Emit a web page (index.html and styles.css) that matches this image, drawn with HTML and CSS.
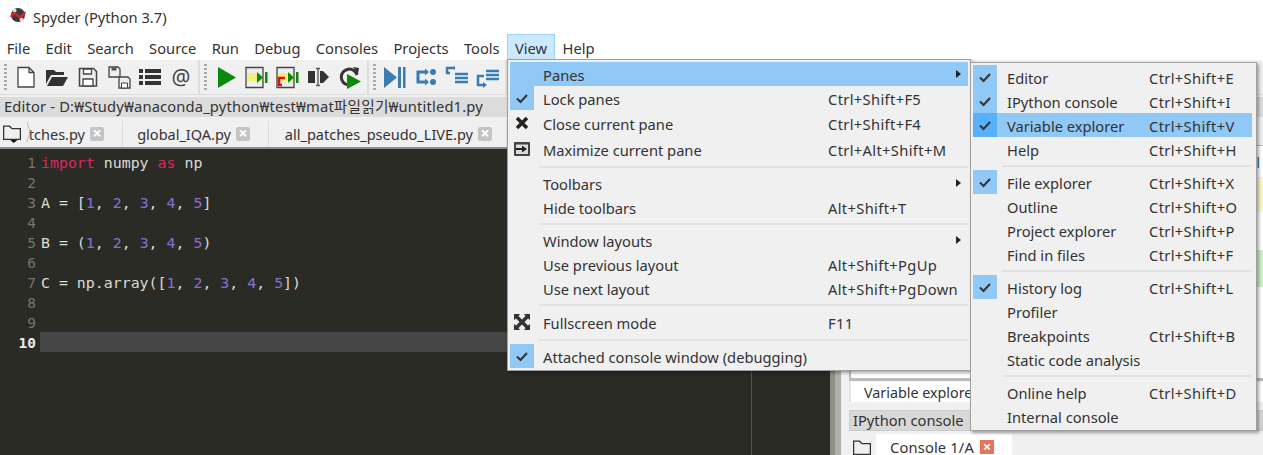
FILE: index.html
```html
<!DOCTYPE html>
<html lang="en">
<head>
<meta charset="utf-8">
<title>Spyder (Python 3.7)</title>
<link rel="stylesheet" href="styles.css">
</head>
<body>
<div class="app">
  <header class="titlebar">
    <svg class="logo" width="16" height="16" viewBox="0 0 16 16"><circle cx="8" cy="8" r="7" fill="#3a3a3a"/><circle cx="4.500" cy="3.500" r="2" fill="#ddd"/><circle cx="11.500" cy="12.500" r="2" fill="#ddd"/><path d="M1 10c3-6 5-3 7-1s4 1 7-4" stroke="#d8232a" stroke-width="2.500" fill="none"/></svg>
    <span>Spyder (Python 3.7)</span>
  </header>
  <nav class="menubar">
    <span class="mi">File</span><span class="mi">Edit</span><span class="mi">Search</span><span class="mi">Source</span><span class="mi">Run</span><span class="mi">Debug</span><span class="mi">Consoles</span><span class="mi">Projects</span><span class="mi">Tools</span><span class="mi active">View</span><span class="mi">Help</span>
  </nav>
  <div class="toolbar">
    <div class="tgroup">
      <i class="grip"></i>
      <svg class="ic" viewBox="0 0 24 24"><path d="M4 2.500h11l5 5V22H4z M15 2.500v5h5" fill="#fff" stroke="#444" stroke-width="1.300"/></svg>
      <svg class="ic" viewBox="0 0 24 24"><path d="M1 19V5h8l2 2h8v3H6zM2 21l5-9h16l-5 9z" fill="#333"/></svg>
      <svg class="ic" viewBox="0 0 24 24"><path d="M3.500 3.500h14l3 3V21h-17z" fill="#eee" stroke="#444" stroke-width="1.500"/><path d="M7.500 4h8v5h-8zM7 14h10v7H7z" fill="#fff" stroke="#444" stroke-width="1.300"/></svg>
      <svg class="ic" viewBox="0 0 24 24"><path d="M2 2h9l2 2v8H2z" fill="#eee" stroke="#444" stroke-width="1.300"/><path d="M4.500 2.500h5v3h-5z" fill="#555"/><path d="M12 12h9l2 2v9H12z" fill="#eee" stroke="#444" stroke-width="1.300"/><path d="M14.500 18h6v5h-6z" fill="#fff" stroke="#444"/></svg>
      <svg class="ic" viewBox="0 0 24 24"><path d="M1 4h4v4H1zM7 4h16v4H7zM1 10h4v4H1zM7 10h16v4H7zM1 16h4v4H1zM7 16h16v4H7z" fill="#333"/></svg>
      <span class="at">@</span>
    </div>
    <div class="tgroup">
      <i class="grip"></i>
      <svg class="ic" viewBox="0 0 24 24"><path d="M4 2l18 10.500L4 23z" fill="#0a8a0a"/></svg>
      <svg class="ic" viewBox="0 0 24 24"><path d="M1 2.500h17v20H1z" fill="#eee" stroke="#444" stroke-width="1.300"/><path d="M2 8h15v8H2z" fill="#f5ee80"/><path d="M12 7l6 5.500-6 5.500zM20 7h2.500v11H20z" fill="#0a8a0a"/></svg>
      <svg class="ic" viewBox="0 0 24 24"><path d="M1 2.500h17v20H1z" fill="#eee" stroke="#444" stroke-width="1.300"/><path d="M2 8h15v8H2z" fill="#f5ee80"/><path d="M12 7l6 5.500-6 5.500zM20 7h2.500v11H20z" fill="#0a8a0a"/><path d="M9 13H3v7h3" fill="none" stroke="#e8100f" stroke-width="2.500"/></svg>
      <svg class="ic" viewBox="0 0 24 24"><path d="M1 6h7v12H1z" fill="#333"/><path d="M9 3.500h4M11 3.500v17M9 20.500h4" stroke="#555" stroke-width="1.300" fill="none"/><path d="M13 6h3l6 6-6 6h-3z" fill="#333"/></svg>
      <svg class="ic" viewBox="0 0 24 24"><path d="M19 10a8 8 0 1 0-9 10" fill="none" stroke="#333" stroke-width="3"/><path d="M15 2l6 1-1 6z" fill="#333"/><path d="M9 9l14 7.500L9 24z" fill="#0a8a0a"/></svg>
    </div>
    <div class="tgroup">
      <i class="grip"></i>
      <svg class="ic" viewBox="0 0 24 24"><path d="M1 2l13 10.500L1 23zM15 2h3v21h-3zM20 2h2.500v21H20z" fill="#3a7cb0"/></svg>
      <svg class="ic" viewBox="0 0 24 24"><path d="M11 7H4v10h7" fill="none" stroke="#3a7cb0" stroke-width="3"/><path d="M11 3.500l4 3.500-4 3.500zM11 13.500l4 3.500-4 3.500z" fill="#3a7cb0"/><circle cx="19" cy="7" r="3" fill="#3a7cb0"/><circle cx="19" cy="17" r="3" fill="#3a7cb0"/></svg>
      <svg class="ic" viewBox="0 0 24 24"><path d="M9 3H2v5h3M10 9h13M10 13h13M10 17h13" fill="none" stroke="#3a7cb0" stroke-width="2.500"/><path d="M7 3l3-2v4z" fill="#3a7cb0"/></svg>
      <svg class="ic" viewBox="0 0 24 24"><path d="M10 6h13M10 10h13M10 14h13M8 11H2v9h5" fill="none" stroke="#3a7cb0" stroke-width="2.500"/><path d="M7 17l4 3-4 3z" fill="#3a7cb0"/></svg>
    </div>
  </div>
  <div class="workspace">
    <section class="editor">
      <div class="panehead">Editor - D:₩Study₩anaconda_python₩test₩mat파일읽기₩untitled1.py</div>
      <div class="tabs">
        <svg class="folder" viewBox="1 2 15 15"><path d="M1.500 14V3h5l2 2h7v9z" fill="none" stroke="#333" stroke-width="1.100"/><path d="M7 14.500h6l-3 2.500z" fill="#111"/></svg>
        <svg class="scroller" viewBox="0 0 6 22"><path d="M1 1l3 10-3 10" fill="none" stroke="#bbb"/></svg>
        <div class="tab t1"><span>tches.py</span><b class="x">×</b></div>
        <div class="tab t2"><span>global_IQA.py</span><b class="x">×</b></div>
        <div class="tab t3"><span>all_patches_pseudo_LIVE.py</span><b class="x">×</b></div>
      </div>
      <div class="code">
<div class="ln"><span class="n">1</span><span class="c"><em>import</em> numpy <em>as</em> np</span></div>
<div class="ln"><span class="n">2</span><span class="c"></span></div>
<div class="ln"><span class="n">3</span><span class="c">A = [<u>1</u>, <u>2</u>, <u>3</u>, <u>4</u>, <u>5</u>]</span></div>
<div class="ln"><span class="n">4</span><span class="c"></span></div>
<div class="ln"><span class="n">5</span><span class="c">B = (<u>1</u>, <u>2</u>, <u>3</u>, <u>4</u>, <u>5</u>)</span></div>
<div class="ln"><span class="n">6</span><span class="c"></span></div>
<div class="ln"><span class="n">7</span><span class="c">C = np.array([<u>1</u>, <u>2</u>, <u>3</u>, <u>4</u>, <u>5</u>])</span></div>
<div class="ln"><span class="n">8</span><span class="c"></span></div>
<div class="ln"><span class="n">9</span><span class="c"></span></div>
<div class="ln cur"><span class="n">10</span><span class="c"></span></div>
      </div>
    </section>
    <aside class="side">
      <div class="sidehead"></div>
      <div class="sidetabs"></div>
      <div class="panel">
        <div class="prow pa"><span class="frag">l</span></div>
        <div class="prow pb"></div>
        <div class="prow pc"></div>
        <div class="prow pd"></div>
      </div>
      <div class="vartab">Variable explorer</div>
      <div class="ipyhead">IPython console</div>
      <div class="contabs">
        <svg class="folder" viewBox="1 2 15 15"><path d="M1.500 14V3h5l2 2h7v9z" fill="none" stroke="#333" stroke-width="1.100"/><path d="M7 14.500h6l-3 2.500z" fill="#111"/></svg>
        <div class="contab"><span>Console 1/A</span><b class="xr">×</b></div>
      </div>
    </aside>
  </div>

  <div class="menu view">
    <div class="row hi"><span class="gut"></span><span class="lb">Panes</span><span class="sc"></span><span class="ar"></span></div>
    <div class="row"><span class="gut on"><svg class="ck" viewBox="0 0 14 14"><path d="M2 7.500l3.500 3.500L12 4" fill="none" stroke="#333" stroke-width="2"/></svg></span><span class="lb">Lock panes</span><span class="sc">Ctrl+Shift+F5</span></div>
    <div class="row mid"><span class="gut"><svg class="mic" viewBox="0 0 16 16"><path d="M3 3l10 10M13 3L3 13" stroke="#222" stroke-width="3.500"/></svg></span><span class="lb">Close current pane</span><span class="sc">Ctrl+Shift+F4</span></div>
    <div class="row tall"><span class="gut"><svg class="mic" viewBox="0 0 16 16"><rect x="0" y="1" width="16" height="14" rx="1" fill="#444"/><rect x="2" y="3.500" width="12" height="9.500" fill="#ddd"/><path d="M2 7h6V4.500l5 3.500-5 3.500V9H2z" fill="#222"/></svg></span><span class="lb">Maximize current pane</span><span class="sc">Ctrl+Alt+Shift+M</span></div>
    <div class="sep"></div>
    <div class="row"><span class="gut"></span><span class="lb">Toolbars</span><span class="sc"></span><span class="ar"></span></div>
    <div class="row"><span class="gut"></span><span class="lb">Hide toolbars</span><span class="sc">Alt+Shift+T</span></div>
    <div class="sep"></div>
    <div class="row"><span class="gut"></span><span class="lb">Window layouts</span><span class="sc"></span><span class="ar"></span></div>
    <div class="row"><span class="gut"></span><span class="lb">Use previous layout</span><span class="sc">Alt+Shift+PgUp</span></div>
    <div class="row"><span class="gut"></span><span class="lb">Use next layout</span><span class="sc">Alt+Shift+PgDown</span></div>
    <div class="sep sep-b"></div>
    <div class="row"><span class="gut"><svg class="mic" viewBox="0 0 16 16"><path d="M0 0h6L4.500 2 8 5.500 11.500 2 10 0h6v6l-2-1.500L10.500 8l3.500 3.500L16 10v6h-6l1.500-2L8 10.500 4.500 14 6 16H0v-6l2 1.500L5.500 8 2 4.500 0 6z" fill="#333"/></svg></span><span class="lb">Fullscreen mode</span><span class="sc">F11</span></div>
    <div class="sep sep-t"></div>
    <div class="row"><span class="gut on"><svg class="ck" viewBox="0 0 14 14"><path d="M2 7.500l3.500 3.500L12 4" fill="none" stroke="#333" stroke-width="2"/></svg></span><span class="lb">Attached console window (debugging)</span><span class="sc"></span></div>
  </div>

  <div class="menu panes">
    <div class="row"><span class="gut on"><svg class="ck" viewBox="0 0 14 14"><path d="M2 7.500l3.500 3.500L12 4" fill="none" stroke="#333" stroke-width="2"/></svg></span><span class="lb">Editor</span><span class="sc">Ctrl+Shift+E</span></div>
    <div class="row"><span class="gut on"><svg class="ck" viewBox="0 0 14 14"><path d="M2 7.500l3.500 3.500L12 4" fill="none" stroke="#333" stroke-width="2"/></svg></span><span class="lb">IPython console</span><span class="sc">Ctrl+Shift+I</span></div>
    <div class="row hi"><span class="gut onhi"><svg class="ck" viewBox="0 0 14 14"><path d="M2 7.500l3.500 3.500L12 4" fill="none" stroke="#333" stroke-width="2"/></svg></span><span class="lb">Variable explorer</span><span class="sc">Ctrl+Shift+V</span></div>
    <div class="row"><span class="gut"></span><span class="lb">Help</span><span class="sc">Ctrl+Shift+H</span></div>
    <div class="sep"></div>
    <div class="row"><span class="gut on"><svg class="ck" viewBox="0 0 14 14"><path d="M2 7.500l3.500 3.500L12 4" fill="none" stroke="#333" stroke-width="2"/></svg></span><span class="lb">File explorer</span><span class="sc">Ctrl+Shift+X</span></div>
    <div class="row"><span class="gut"></span><span class="lb">Outline</span><span class="sc">Ctrl+Shift+O</span></div>
    <div class="row"><span class="gut"></span><span class="lb">Project explorer</span><span class="sc">Ctrl+Shift+P</span></div>
    <div class="row"><span class="gut"></span><span class="lb">Find in files</span><span class="sc">Ctrl+Shift+F</span></div>
    <div class="sep"></div>
    <div class="row"><span class="gut on"><svg class="ck" viewBox="0 0 14 14"><path d="M2 7.500l3.500 3.500L12 4" fill="none" stroke="#333" stroke-width="2"/></svg></span><span class="lb">History log</span><span class="sc">Ctrl+Shift+L</span></div>
    <div class="row"><span class="gut"></span><span class="lb">Profiler</span><span class="sc"></span></div>
    <div class="row"><span class="gut"></span><span class="lb">Breakpoints</span><span class="sc">Ctrl+Shift+B</span></div>
    <div class="row"><span class="gut"></span><span class="lb">Static code analysis</span><span class="sc"></span></div>
    <div class="sep"></div>
    <div class="row"><span class="gut"></span><span class="lb">Online help</span><span class="sc">Ctrl+Shift+D</span></div>
    <div class="row"><span class="gut"></span><span class="lb">Internal console</span><span class="sc"></span></div>
  </div>
</div>
</body>
</html>
```
FILE: styles.css
```css
* { box-sizing: border-box; }
html, body { margin: 0; height: 100%; overflow: hidden; }
body { font-family: "Noto Sans", "Noto Sans CJK KR", sans-serif; font-size: 14.700px; color: #333; background: #fff; }
.app { position: relative; width: 1263px; height: 455px; overflow: hidden; display: flex; flex-direction: column; }
.titlebar { height: 34px; flex: none; display: flex; align-items: center; gap: 7px; padding-left: 10px; }
.logo { flex: none; margin-bottom: 4px; }
.menubar { height: 26px; flex: none; display: flex; margin-left: -1px; }
.mi { padding: 0 6.700px; line-height: 26px; border: 1px solid transparent; border-bottom: 0; }
.mi.active { background: #cce8ff; border-color: #99d1ff; }
.toolbar { height: 35px; flex: none; display: flex; background: #f0f0f0; border-bottom: 1px solid #ddd; }
.tgroup { display: flex; align-items: center; gap: 7px; padding: 0 5px 0 4px; border-right: 2px solid #ddd; }
.grip { width: 3px; height: 26px; background: repeating-linear-gradient(#aaa 0 2px, transparent 2px 4px); }
.ic { width: 24px; height: 24px; flex: none; }
.at { width: 24px; font-size: 21px; text-align: center; color: #444; line-height: 24px; }
.workspace { flex: 1; display: flex; min-height: 0; }
.editor { width: 830px; flex: none; display: flex; flex-direction: column; background: #f0f0f0; }
.panehead { height: 20px; margin-top: 2px; flex: none; background: #dcdcdc; line-height: 18px; padding-left: 4px; white-space: nowrap; letter-spacing: .17px; }
.tabs { height: 32px; flex: none; display: flex; align-items: center; padding-top: 4px; background: #f0f0f0; border-bottom: 2px solid #8c8c8c; font-size: 14.500px; position: relative; }
.folder { width: 18px; height: 18px; flex: none; margin-left: 3px; }
.scroller { width: 6px; height: 22px; flex: none; position: absolute; left: 26px; top: 4px; }
.tab { display: flex; align-items: center; justify-content: flex-end; gap: 5px; padding-right: 18px; height: 100%; border-right: 1px solid #ddd; white-space: nowrap; }
.t1 { width: 102px; }
.t2 { width: 146px; }
.t3 { width: 238px; padding-right: 14px; }
.x { width: 14px; height: 14px; background: #c4c4c4; color: #fff; border-radius: 2px; font-size: 16px; line-height: 13px; text-align: center; flex: none; }
.code { flex: 1; background: linear-gradient(90deg, transparent 751px, #55554f 751px, #55554f 752px, transparent 752px), #2b2b26; font-family: "DejaVu Sans Mono", monospace; font-size: 14.900px; color: #dcdcd4; padding-top: 3px; }
.ln { height: 20px; line-height: 22px; display: flex; }
.n { width: 36px; flex: none; text-align: right; color: #75756f; font-size: 14.500px; }
.c { flex: 1; padding: 0 0 0 5px; white-space: pre; }
.c em { font-style: normal; color: #e0245e; }
.c u { text-decoration: none; color: #8a6fd1; }
.cur .n { color: #e8e8e8; font-weight: bold; }
.cur .c { background: #464646; margin-left: 4px; padding-left: 1px; }
.side { flex: 1; display: flex; flex-direction: column; background: linear-gradient(90deg, #8f8f89 0 5px, #b0b0aa 5px 11px, #f0f0f0 11px) ; padding-left: 19px; }
.sidehead { height: 20px; margin-top: 2px; flex: none; background: #dcdcdc; }
.sidetabs { height: 29px; flex: none; background: #f0f0f0; border-bottom: 1px solid #bbb; }
.panel { height: 235px; flex: none; background: #fff; border-left: 2px solid #bbb; border-bottom: 3px solid #bbb; }
.prow { display: flex; justify-content: flex-end; }
.pa { height: 31px; align-items: center; }
.frag { color: #2b6cb0; margin-right: 3px; }
.pb { height: 35px; background: #fbf8c8; }
.pc { height: 38px; }
.pd { height: 37px; background: #cdf2c8; }
.vartab { height: 20px; flex: none; margin-top: 1px; background: #fff; border-left: 2px solid #e4e4e4; padding-left: 13px; line-height: 22px; white-space: nowrap; font-size: 14.300px; }
.ipyhead { height: 21px; flex: none; margin-top: 8px; background: #d8d8d8; border: 1px solid #ccc; padding-left: 3px; line-height: 19px; }
.contabs { display: flex; align-items: flex-start; height: 21px; flex: none; margin-top: 3px; }
.contabs .folder { margin: 6px 0 0 4px; }
.contab { width: 136px; height: 21px; margin-left: 5px; background: #fff; display: flex; align-items: flex-start; gap: 6px; padding: 6px 0 0 14px; line-height: 15px; white-space: nowrap; letter-spacing: .15px; }
.xr { width: 14px; height: 14px; flex: none; background: #e8735a; color: #fff; font-size: 15px; line-height: 13px; text-align: center; letter-spacing: 0; }
.menu { position: absolute; background: #f0f0f0; border: 1px solid #a0a0a0; box-shadow: 2px 2px 3px rgba(0,0,0,.35); padding: 2px; }
.view { left: 507px; top: 59px; width: 464px; height: 312px; }
.panes { left: 970px; top: 62px; width: 287px; height: 369px; padding-right: 4px; }
.row { height: 24px; flex: none; display: flex; align-items: center; white-space: nowrap; position: relative; }
.row.mid { height: 25px; }
.row.tall { height: 27px; }
.row.hi { background: #90c8f6; }
.gut { width: 24px; height: 24px; flex: none; display: flex; align-items: center; justify-content: center; }
.gut.on { background: #90c8f6; }
.gut.onhi { background: #56b0fa; }
.ck { width: 14px; height: 14px; }
.mic { width: 16px; height: 16px; }
.lb { margin: 2px 0 0 10px; flex: none; }
.view .lb { width: 285px; margin-left: 9px; }
.panes .lb { width: 142px; }
.sc { letter-spacing: .35px; margin-top: 2px; }
.sep { height: 2px; margin: 4px 0 3px 29px; background: #e2e2e2; }
.sep-b { margin-bottom: 4px; }
.sep-t { margin-top: 5px; }
.ar { position: absolute; right: 7px; top: 8px; border-left: 5px solid #222; border-top: 4px solid transparent; border-bottom: 4px solid transparent; }
```
